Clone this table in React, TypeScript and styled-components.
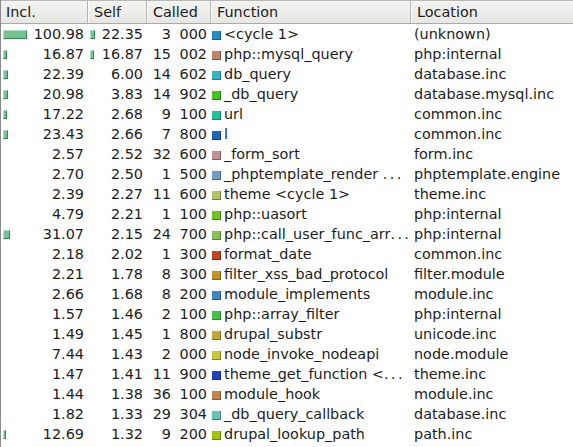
import React from "react";
import styled, { createGlobalStyle } from "styled-components";

const Global = createGlobalStyle`
  html, body { margin: 0; padding: 0; background: #ffffff; }
  body { font-family: "DejaVu Sans", "Liberation Sans", sans-serif; font-size: 14.4px; color: #1c1c1c; }
`;

const COLS = "88px 59px 64px 200px 1fr";

const Table = styled.div`
  width: 573px;
  height: 447px;
  overflow: hidden;
  background: #ffffff;
  border-left: 1px solid #8a8a8a;
  box-sizing: border-box;
`;

const Header = styled.div`
  display: grid;
  grid-template-columns: ${COLS};
  height: 24px;
  background: linear-gradient(#f4f4f2, #e6e6e3);
  border-top: 1px solid #b8b8b4;
  border-bottom: 1px solid #a9a9a5;
  box-sizing: border-box;
  margin-left: -1px;
`;

const HeadCell = styled.div`
  display: flex;
  align-items: center;
  padding-left: 6px;
  border-right: 1px solid #b4b4b0;
  box-shadow: inset 1px 0 0 #fbfbfa;
  color: #1c1c1c;
  white-space: nowrap;
  &:last-child { border-right: none; }
`;

const Row = styled.div`
  display: grid;
  grid-template-columns: ${COLS};
  height: 20px;
  align-items: center;
  margin-left: -1px;
`;

const NumCell = styled.div`
  display: flex;
  align-items: center;
  justify-content: space-between;
  padding: 0 4px 0 3px;
  white-space: pre;
`;

const SelfCell = styled(NumCell)`
  padding-left: 2px;
`;

const NumText = styled.span<{ $grouped?: boolean }>`
  margin-left: auto;
  word-spacing: ${(p) => (p.$grouped ? "4px" : "0")};
`;

const Bar = styled.span<{ $w: number }>`
  display: inline-block;
  height: 9px;
  width: ${(p) => p.$w}px;
  background: #74c492;
  border: 1px solid #3a8058;
  border-top-color: #b0e0c2;
  border-left-color: #b0e0c2;
  box-sizing: border-box;
  margin-top: 1px;
  flex: none;
`;

const FuncCell = styled.div`
  display: flex;
  align-items: center;
  padding-left: 1px;
  white-space: pre;
  overflow: hidden;
`;

const Swatch = styled.span<{ $c: string }>`
  display: inline-block;
  width: 8px;
  height: 8px;
  background: ${(p) => p.$c};
  border-right: 1px solid rgba(0,0,0,0.35);
  border-bottom: 1px solid rgba(0,0,0,0.35);
  margin: 2px 3px 0 0;
  flex: none;
`;

const Elide = styled.span`
  letter-spacing: 2.4px;
`;

const LocCell = styled.div`
  padding-left: 3px;
  white-space: nowrap;
  overflow: hidden;
`;

type R = [string, string, string, string, string, string, number, number, boolean?];

const rows: R[] = [
  ["100.98", "22.35", "3 000", "<cycle 1>", "(unknown)", "#1f8fc4", 24, 5],
  ["16.87", "16.87", "15 002", "php::mysql_query", "php:internal", "#c08468", 4, 4],
  ["22.39", "6.00", "14 602", "db_query", "database.inc", "#33b4c4", 5, 0],
  ["20.98", "3.83", "14 902", "_db_query", "database.mysql.inc", "#3ec41e", 5, 0],
  ["17.22", "2.68", "9 100", "url", "common.inc", "#1fc49c", 4, 0],
  ["23.43", "2.66", "7 800", "l", "common.inc", "#1f62c4", 5, 0],
  ["2.57", "2.52", "32 600", "_form_sort", "form.inc", "#c49090", 0, 0],
  ["2.70", "2.50", "1 500", "_phptemplate_render ", "phptemplate.engine", "#709cc8", 0, 0, true],
  ["2.39", "2.27", "11 600", "theme <cycle 1>", "theme.inc", "#b4c464", 0, 0],
  ["4.79", "2.21", "1 100", "php::uasort", "php:internal", "#6cc41e", 0, 0],
  ["31.07", "2.15", "24 700", "php::call_user_func_arr", "php:internal", "#84c454", 7, 0, true],
  ["2.18", "2.02", "1 300", "format_date", "common.inc", "#c4441e", 0, 0],
  ["2.21", "1.78", "8 300", "filter_xss_bad_protocol", "filter.module", "#c4941e", 0, 0],
  ["2.66", "1.68", "8 200", "module_implements", "module.inc", "#3a88c4", 0, 0],
  ["1.57", "1.46", "2 100", "php::array_filter", "php:internal", "#44c444", 0, 0],
  ["1.49", "1.45", "1 800", "drupal_substr", "unicode.inc", "#c4a834", 0, 0],
  ["7.44", "1.43", "2 000", "node_invoke_nodeapi", "node.module", "#c8c834", 0, 0],
  ["1.47", "1.41", "11 900", "theme_get_function <", "theme.inc", "#1e44c4", 0, 0, true],
  ["1.44", "1.38", "36 100", "module_hook", "module.inc", "#c4844a", 0, 0],
  ["1.82", "1.33", "29 304", "_db_query_callback", "database.inc", "#64c4b8", 0, 0],
  ["12.69", "1.32", "9 200", "drupal_lookup_path", "path.inc", "#a4c400", 3, 0],
];

export default function App() {
  return (
    <>
      <Global />
      <Table>
        <Header>
          <HeadCell>Incl.</HeadCell>
          <HeadCell>Self</HeadCell>
          <HeadCell>Called</HeadCell>
          <HeadCell>Function</HeadCell>
          <HeadCell>Location</HeadCell>
        </Header>
        {rows.map((r, i) => (
          <Row key={i}>
            <NumCell>
              {r[6] > 0 && <Bar $w={r[6]} />}
              <NumText>{r[0]}</NumText>
            </NumCell>
            <SelfCell>
              {r[7] > 0 && <Bar $w={r[7]} />}
              <NumText>{r[1]}</NumText>
            </SelfCell>
            <NumCell>
              <NumText $grouped>{r[2]}</NumText>
            </NumCell>
            <FuncCell>
              <Swatch $c={r[5]} />
              {r[3]}
              {r[8] && <Elide>...</Elide>}
            </FuncCell>
            <LocCell>{r[4]}</LocCell>
          </Row>
        ))}
      </Table>
    </>
  );
}
